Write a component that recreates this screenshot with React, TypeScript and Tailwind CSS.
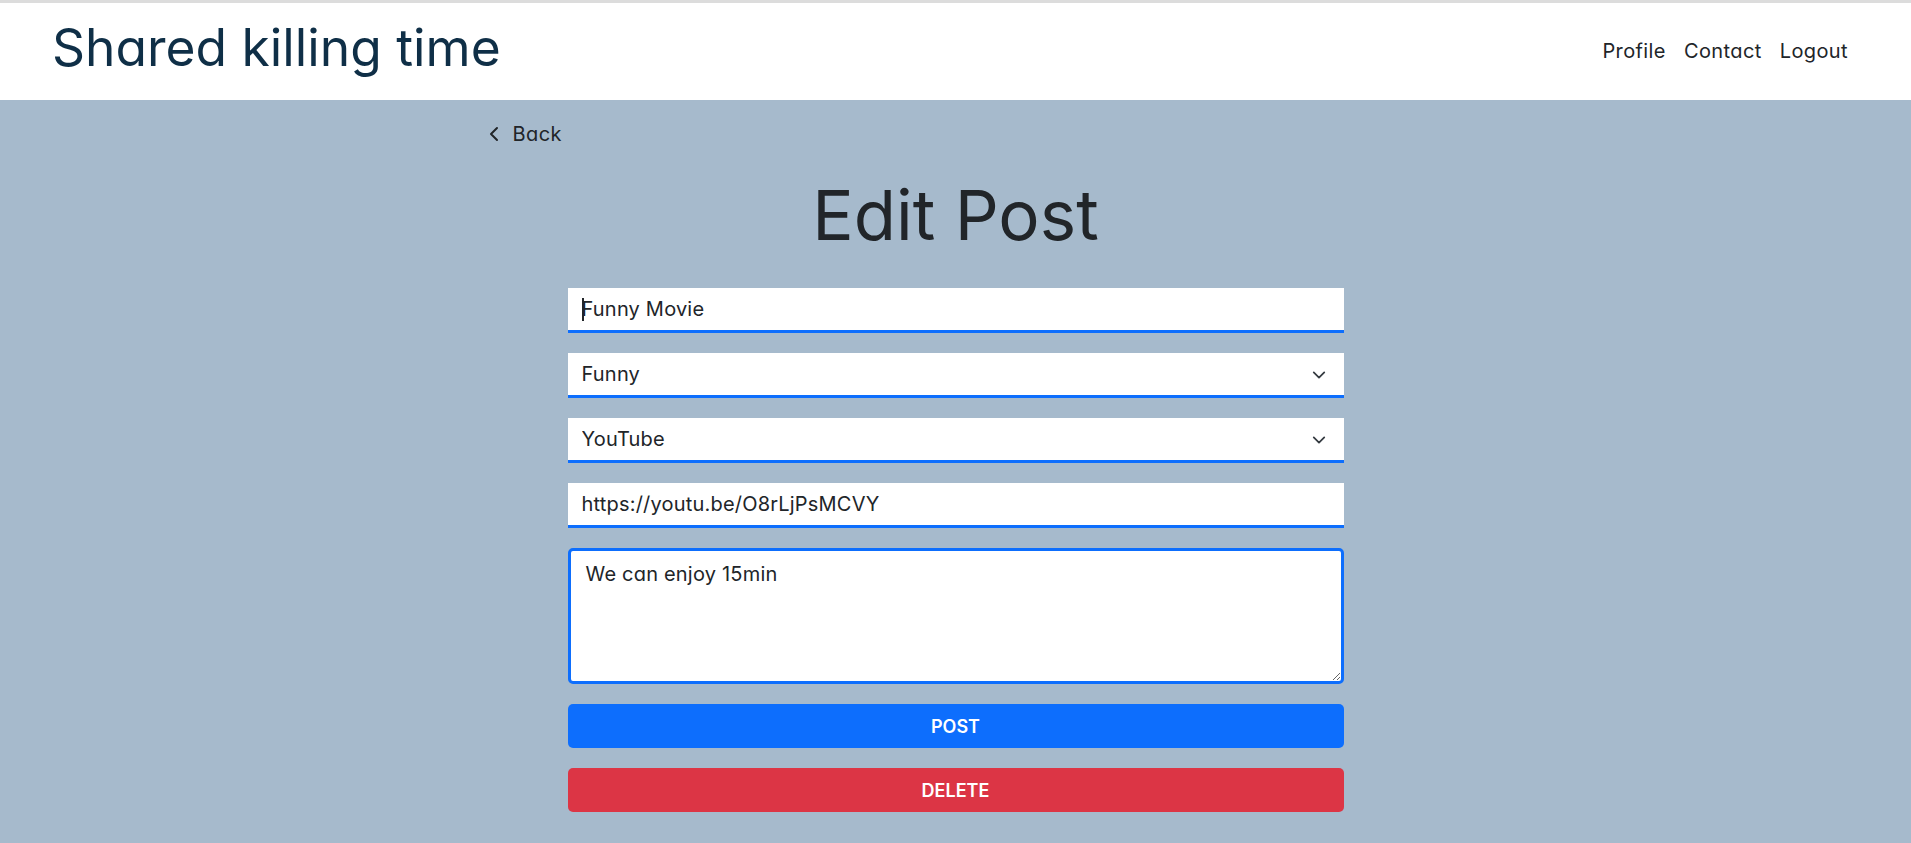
import React, { useState } from 'react';

const fieldBase =
  'w-full h-[45px] bg-white border-0 border-b-[3px] border-[#0d6efd] px-[14px] text-[20px] tracking-[0.01em] text-[#212529] outline-none';

const Chevron = () => (
  <svg
    className="absolute right-[18px] top-[15px] pointer-events-none"
    width="14"
    height="14"
    viewBox="0 0 16 16"
    fill="none"
    stroke="#343a40"
    strokeWidth="2"
    strokeLinecap="round"
    strokeLinejoin="round"
  >
    <path d="M2 5l6 6 6-6" />
  </svg>
);

const App = () => {
  const [title, setTitle] = useState('Funny Movie');
  const [category, setCategory] = useState('Funny');
  const [platform, setPlatform] = useState('YouTube');
  const [url, setUrl] = useState('https://youtu.be/O8rLjPsMCVY');
  const [body, setBody] = useState('We can enjoy 15min');

  return (
    <div className="min-h-screen bg-[#a6bacc] font-['Inter','Open_Sans',sans-serif] [font-feature-settings:'cv11']">
      <header className="h-[100px] bg-white border-t-[3px] border-[#dcdcdc] flex items-center justify-between pl-[52px] pr-[63px]">
        <h1 className="text-[51.5px] leading-none text-[#0f2f47] pb-[8px]">Shared killing time</h1>
        <nav className="flex items-center gap-[18px] text-[20px] tracking-[0.02em] text-[#212529] pb-[2px]">
          <a href="#">Profile</a>
          <a href="#">Contact</a>
          <a href="#">Logout</a>
        </nav>
      </header>

      <main className="w-[934px] mx-auto pt-[19px] pb-[30px]">
        <a href="#" className="inline-flex items-center gap-[13px] text-[20px] tracking-[0.02em] text-[#212529]">
          <svg width="11" height="16" viewBox="0 0 11 16" fill="none" stroke="#212529" strokeWidth="2" strokeLinecap="round" strokeLinejoin="round">
            <path d="M8 2L2 8l6 6" />
          </svg>
          Back
        </a>

        <h2 className="text-center text-[69px] leading-none text-[#212529] mt-[32px] mb-[38px]">Edit Post</h2>

        <form className="w-[776px] mx-auto flex flex-col gap-[20px]" onSubmit={(e) => e.preventDefault()}>
          <div className="relative">
            <input className={fieldBase} value={title} onChange={(e) => setTitle(e.target.value)} />
            <div className="absolute left-[14px] top-[10px] w-[2px] h-[23px] bg-[#212529]" />
          </div>

          <div className="relative">
            <select className={`${fieldBase} appearance-none`} value={category} onChange={(e) => setCategory(e.target.value)}>
              <option>Funny</option>
              <option>Scary</option>
              <option>Sad</option>
            </select>
            <Chevron />
          </div>

          <div className="relative">
            <select className={`${fieldBase} appearance-none`} value={platform} onChange={(e) => setPlatform(e.target.value)}>
              <option>YouTube</option>
              <option>Netflix</option>
            </select>
            <Chevron />
          </div>

          <input className={fieldBase} value={url} onChange={(e) => setUrl(e.target.value)} />

          <textarea
            className="w-full h-[136px] bg-white border-[3px] border-[#0d6efd] rounded-[5px] px-[15px] py-[8px] text-[20px] tracking-[0.01em] text-[#212529] outline-none"
            value={body}
            onChange={(e) => setBody(e.target.value)}
          />

          <button type="submit" className="w-full h-[44px] bg-[#0d6efd] text-white text-[18px] font-semibold rounded-[5px] uppercase">
            Post
          </button>
          <button type="button" className="w-full h-[44px] bg-[#dc3545] text-white text-[18px] font-semibold rounded-[5px] uppercase">
            Delete
          </button>
        </form>
      </main>
    </div>
  );
};

export default App;
